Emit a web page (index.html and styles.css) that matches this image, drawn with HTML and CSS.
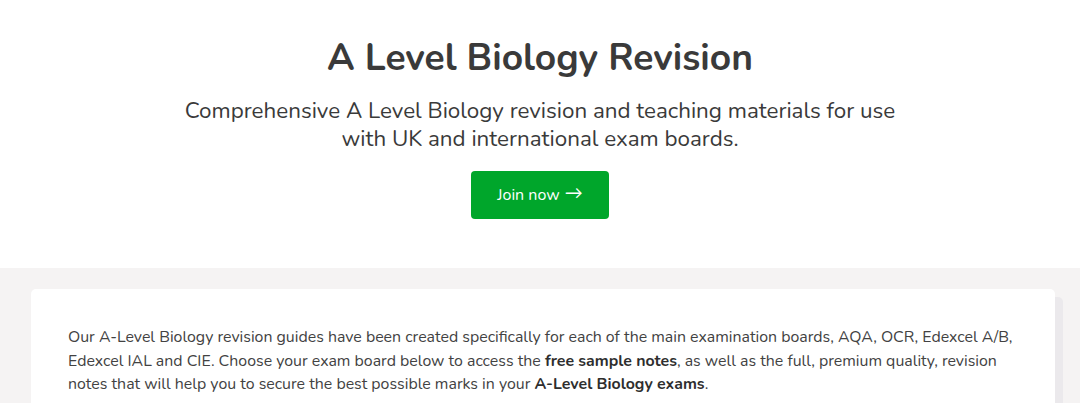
FILE: index.html
```html
<!DOCTYPE html>
<html lang="en">
<head>
<meta charset="utf-8">
<title>A Level Biology Revision</title>
<link rel="stylesheet" href="styles.css">
</head>
<body>
<section class="hero">
  <h1 class="hero-title">A Level Biology Revision</h1>
  <p class="hero-sub">Comprehensive A Level Biology revision and teaching materials for use<br>with UK and international exam boards.</p>
  <a class="btn-join" href="#">Join now <span class="arrow">&#x2192;</span></a>
</section>
<section class="content">
  <div class="card">
    <p class="intro">Our A-Level Biology revision guides have been created specifically for each of the main examination boards, AQA, OCR, Edexcel A/B, Edexcel IAL and CIE. Choose your exam board below to access the <strong>free sample notes</strong>, as well as the full, premium quality, revision notes that will help you to secure the best possible marks in your <strong>A-Level Biology exams</strong>.</p>
  </div>
</section>
</body>
</html>
```
FILE: styles.css
```css
html, body {
  margin: 0;
  padding: 0;
}
body {
  font-family: "Nunito", "Lato", "Noto Sans", sans-serif;
  color: #3d3d3d;
  background: #f5f3f3;
}
.hero {
  background: #ffffff;
  display: flex;
  flex-direction: column;
  align-items: center;
  padding: 36px 0 48px;
  height: 184px;
}
.hero-title {
  margin: 0;
  font-size: 37.2px;
  font-weight: 700;
  color: #3a3a3a;
  line-height: 44px;
}
.hero-sub {
  margin: 17px 0 0;
  text-align: center;
  font-size: 22.4px;
  line-height: 28px;
  color: #3a3a3a;
}
.btn-join {
  margin-top: 18px;
  display: inline-flex;
  align-items: center;
  justify-content: center;
  width: 138px;
  height: 48px;
  background: #00a62b;
  color: #ffffff;
  border-radius: 4px;
  text-decoration: none;
  font-size: 16px;
}
.arrow {
  margin-left: 5px;
  font-size: 18px;
  line-height: 1;
  position: relative;
  top: -2px;
}
.content {
  padding: 21px 25px 0 31px;
}
.card {
  background: #ffffff;
  border-radius: 5px;
  box-shadow: 8px 8px 0 #ebe9ec;
  padding: 37px 24px 40px 37px;
}
.intro {
  margin: 0;
  font-size: 15.9px;
  line-height: 23.5px;
  color: #424242;
}
.intro strong {
  color: #2e2e2e;
}
```
